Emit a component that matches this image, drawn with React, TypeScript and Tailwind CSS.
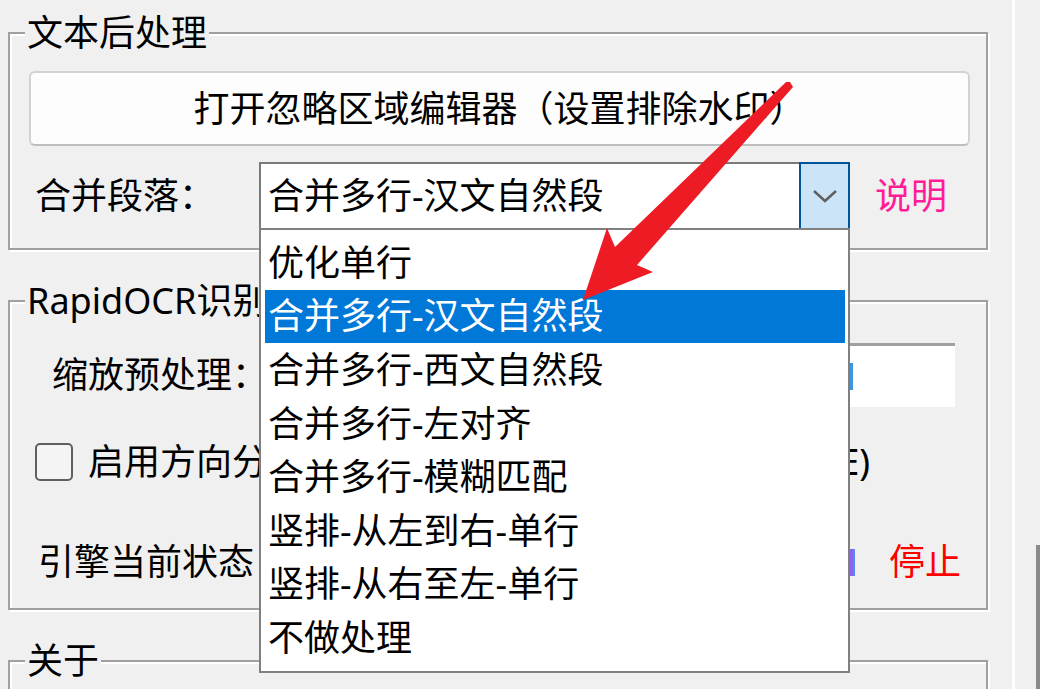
import type { ReactNode } from "react";

const options = [
  "优化单行",
  "合并多行-汉文自然段",
  "合并多行-西文自然段",
  "合并多行-左对齐",
  "合并多行-模糊匹配",
  "竖排-从左到右-单行",
  "竖排-从右至左-单行",
  "不做处理",
];

// Windows style etched group box
const GroupBox = ({ title, className = "", children }: { title: string; className?: string; children?: ReactNode }) => {
  return (
    <div
      className={`flex flex-col w-[980px] border-2 border-[#a0a0a0] shadow-[inset_2px_2px_0_#fff,2px_2px_0_#fff] ${className}`}
    >
      <div className="-mt-[19px] ml-[15px] self-start bg-[#f0f0f0] px-[2px] text-[36px] leading-[36px] whitespace-nowrap">
        {title}
      </div>
      {children}
    </div>
  );
};

const App = () => {
  const selected = 1;

  return (
    <div className="relative flex w-[1040px] h-[689px] overflow-hidden bg-[#f0f0f0] text-black font-['Noto_Sans','Noto_Sans_CJK_SC',sans-serif]">
      <div className="flex flex-col w-[1012px] pl-[8px] pt-[32px] shrink-0">
        {/* 文本后处理 */}
        <GroupBox title="文本后处理">
          <button className="mt-[20px] ml-[19px] mr-[16px] h-[75px] rounded-[6px] border-2 border-[#d2d2d2] border-b-[#bdbdbd] bg-[#fdfdfd] text-[36px] leading-none">
            打开忽略区域编辑器（设置排除水印）
          </button>

          <div className="mt-[16px] mb-[18px] flex items-center h-[68px]">
            <div className="ml-[25px] w-[224px] text-[36px] leading-none whitespace-nowrap">合并段落：</div>
            <div className="relative z-10 flex w-[591px] h-[68px]">
              <div className="flex-1 flex items-center bg-white border-y-2 border-l-2 border-[#7a7a7a] pl-[7px] text-[36px] leading-none whitespace-nowrap">
                {options[selected]}
              </div>
              <div className="flex items-center justify-center w-[51px] h-[68px] border-2 border-[#005499] bg-[#cce4f7]">
                <svg width="26" height="16" viewBox="0 0 26 16">
                  <path d="M2 3 L13 13 L24 3" fill="none" stroke="#606060" strokeWidth="2.5" />
                </svg>
              </div>

              {/* open list */}
              <div className="absolute left-0 top-[66px] w-[591px] h-[445px] border-2 border-[#808080] bg-white pt-[6px] pl-[4px] pr-[3px]">
                {options.map((opt, i) => (
                  <div
                    key={opt}
                    className={`flex items-center h-[53.6px] pl-[3px] text-[36px] leading-none whitespace-nowrap ${
                      i === selected ? "bg-[#0078d7] text-white" : "text-black"
                    }`}
                  >
                    {opt}
                  </div>
                ))}
              </div>
            </div>
            <div className="ml-[25px] text-[36px] leading-none text-[#ff1c96]">说明</div>
          </div>
        </GroupBox>

        {/* RapidOCR */}
        <GroupBox title="RapidOCR识别引擎" className="mt-[50px]">
          <div className="mt-[24px] flex items-center h-[64px]">
            <div className="ml-[42px] w-[207px] text-[36px] leading-none whitespace-nowrap">缩放预处理：</div>
            <div className="flex-1 mr-[31px] h-[64px] flex items-center justify-end bg-white border-t-[3px] border-[#a0a0a0]">
              <div className="w-[3px] h-[27px] bg-[#3f95db] mr-[102px]" />
            </div>
          </div>

          <div className="mt-[36px] flex items-center h-[38px]">
            <div className="ml-[25px] w-[38px] h-[38px] rounded-[5px] border-2 border-[#5f5f5f] bg-[#f4f4f4]" />
            <div className="ml-[15px] text-[36px] leading-none whitespace-nowrap">启用方向分类</div>
            <div className="ml-auto mr-[116px] text-[36px] leading-none">E)</div>
          </div>

          <div className="mt-[63px] mb-[28px] flex items-center h-[36px]">
            <div className="ml-[28px] text-[36px] leading-none whitespace-nowrap">引擎当前状态</div>
            <div className="ml-auto flex h-[27px]">
              <div className="w-[3px] bg-[#8b63f0]" />
              <div className="w-[2px] bg-[#4e8ef0]" />
            </div>
            <div className="ml-[34px] mr-[25px] text-[36px] leading-none text-[#ff0000]">停止</div>
          </div>
        </GroupBox>

        {/* 关于 */}
        <GroupBox title="关于" className="mt-[50px] h-[120px] shrink-0" />
      </div>

      <div className="w-[3px] shrink-0 bg-white" />
      <div className="w-[21px] shrink-0" />
      <div className="w-[4px] shrink-0 pt-[545px]">
        <div className="h-full bg-[#8a8a8a]" />
      </div>

      {/* red annotation arrow */}
      <svg
        className="absolute left-0 top-0 z-20 pointer-events-none"
        width="1040"
        height="689"
        viewBox="0 0 1040 689"
      >
        <polygon
          points="783,85 786,82 790,82 793,87 637,265 653,272 583,300 607,228 615,247"
          fill="#ed1c24"
        />
      </svg>
    </div>
  );
};

export default App;
